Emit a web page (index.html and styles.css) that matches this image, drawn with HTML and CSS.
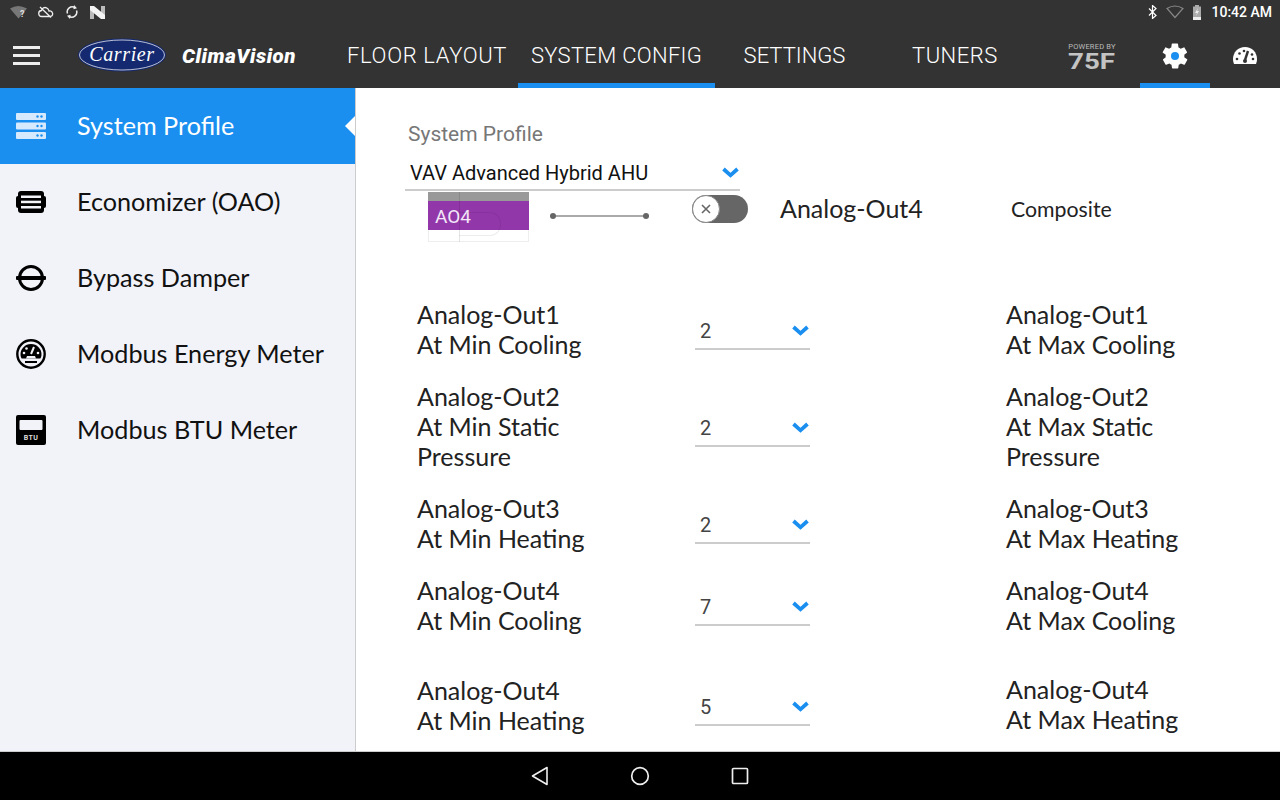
FILE: index.html
```html
<!DOCTYPE html>
<html lang="en">
<head>
<meta charset="utf-8">
<title>ClimaVision</title>
<link rel="stylesheet" href="styles.css">
</head>
<body>
<div class="screen">
  <div class="status">
    <div class="status-left">
      <svg width="17" height="14" viewBox="0 0 17 14"><path d="M0 3.500Q8-1.500 17 3.500L8.500 13.500Z" fill="#777"/><text x="10" y="12" class="q">?</text></svg>
      <svg width="16" height="14" viewBox="0 0 16 14"><path d="M4 11.500a3 3 0 0 1-.5-6C4 3 6.500 2 8.500 2.800c1.500.6 2.300 1.800 2.500 3.200a2.800 2.800 0 0 1 1.500 5.500zM2 2l11 10.500" fill="none" stroke="#eee" stroke-width="1.300"/></svg>
      <svg width="14" height="14" viewBox="0 0 14 14"><path d="M2.500 8.500A5 5 0 0 1 10 2.700M11.500 5.500A5 5 0 0 1 4 11.300" fill="none" stroke="#eee" stroke-width="1.500"/><path d="M9 0l3 3.200-3.600 1zM5 14l-3-3.200 3.600-1z" fill="#eee"/></svg>
      <svg width="15" height="14" viewBox="0 0 15 14"><path d="M0 1h4v13H0zM11 1h4v13h-4z" fill="#bbb"/><path d="M0 1h4l11 9v4h-4L0 5z" fill="#f4f4f4"/></svg>
    </div>
    <div class="status-right">
      <svg width="10" height="14" viewBox="0 0 10 14"><path d="M1 3.500l7 7-3.500 3V.500l3.500 3-7 7" fill="none" stroke="#fff" stroke-width="1.200"/></svg>
      <svg width="18" height="14" viewBox="0 0 18 14"><path d="M1 3.500Q9-1.500 17 3.500L9 12.500Z" fill="none" stroke="#888" stroke-width="1.200"/></svg>
      <svg width="10" height="15" viewBox="0 0 10 15"><path d="M3 0h4v1.500h2V15H1V1.500h2z" fill="#aaa"/><path d="M1 12h8v3H1z" fill="#eee"/><path d="M6 3L3 8h2l-1 3 3-5H5z" fill="#eee"/></svg>
      <span class="clock">10:42 AM</span>
    </div>
  </div>
  <header class="topbar">
    <div class="burger"><i></i><i></i><i></i></div>
    <svg class="carrier" width="90" height="34" viewBox="0 0 90 34"><ellipse cx="45" cy="17" rx="44" ry="16.500" fill="#14296f"/><ellipse cx="45" cy="17" rx="42.500" ry="15" fill="none" stroke="#fff" stroke-width=".7"/><text x="45" y="23" class="carrier-text">Carrier</text></svg>
    <span class="brand">ClimaVision</span>
    <nav class="tabs">
      <a class="tab t1">FLOOR LAYOUT</a>
      <a class="tab t2 on">SYSTEM CONFIG</a>
      <a class="tab t3">SETTINGS</a>
      <a class="tab t4">TUNERS</a>
    </nav>
    <div class="powered">
      <span class="pw">POWERED BY</span>
      <svg class="sf-box" width="48" height="26" viewBox="0 0 48 26"><text x="0" y="18" textLength="47" lengthAdjust="spacingAndGlyphs" class="sf">75F</text></svg>
    </div>
    <div class="hicon on">
      <svg width="30" height="30" viewBox="0 0 24 24"><path fill="#fff" d="M19.400 13c0-.3.100-.6.100-1s0-.7-.1-1l2.100-1.600c.2-.2.200-.4.100-.6l-2-3.500c-.1-.2-.4-.3-.6-.2l-2.500 1c-.5-.4-1.100-.7-1.700-1l-.4-2.700c0-.2-.2-.4-.5-.4h-4c-.3 0-.5.200-.5.400l-.4 2.700c-.6.300-1.200.6-1.700 1l-2.500-1c-.2-.1-.5 0-.6.200l-2 3.500c-.1.200-.1.400.1.600L4.600 11c0 .3-.1.700-.1 1s0 .7.100 1l-2.100 1.600c-.2.200-.2.400-.1.600l2 3.500c.1.200.4.300.6.200l2.500-1c.5.400 1.100.7 1.700 1l.4 2.700c0 .2.200.4.500.4h4c.3 0 .5-.2.500-.4l.4-2.700c.6-.3 1.200-.6 1.700-1l2.500 1c.2.100.5 0 .6-.2l2-3.500c.1-.2.100-.4-.1-.6z"/><circle cx="12" cy="12" r="3.200" fill="#1a8ff0"/></svg>
    </div>
    <div class="hicon">
      <svg width="26" height="24" viewBox="0 0 26 24"><path fill="#fff" d="M13 3C6 3 1 8.500 1 15c0 2 .5 3.500 1 5h22c.5-1.500 1-3 1-5 0-6.500-5-12-12-12z"/><path d="M13 16l3-9" stroke="#333" stroke-width="2.400"/><circle cx="13" cy="17" r="2" fill="#333"/><g fill="#333"><circle cx="5" cy="15" r="1.300"/><circle cx="7.500" cy="9.500" r="1.300"/><circle cx="12" cy="7" r="1.300"/><circle cx="20" cy="10.500" r="1.300"/><circle cx="21" cy="15" r="1.300"/></g></svg>
    </div>
  </header>
  <div class="body">
    <aside class="side">
      <div class="item active">
        <svg class="ic" width="30" height="26" viewBox="0 0 30 26"><g fill="#d7eafd"><rect y="0" width="30" height="7" rx="1"/><rect y="9.500" width="30" height="7" rx="1"/><rect y="19" width="30" height="7" rx="1"/></g><g fill="#1a8ff0"><circle cx="21.500" cy="3.500" r="1.200"/><circle cx="25.500" cy="3.500" r="1.200"/><circle cx="21.500" cy="13" r="1.200"/><circle cx="25.500" cy="13" r="1.200"/><circle cx="21.500" cy="22.500" r="1.200"/><circle cx="25.500" cy="22.500" r="1.200"/></g></svg>
        <span>System Profile</span>
        <i class="caret"></i>
      </div>
      <div class="item">
        <svg class="ic" width="30" height="22" viewBox="0 0 30 22"><rect x="2" y="0" width="26" height="22" rx="3" fill="#000"/><rect x="0" y="5" width="30" height="12" rx="2" fill="#000"/><g fill="#f2f3f9"><rect x="5" y="4.500" width="20" height="2.500"/><rect x="5" y="9.700" width="20" height="2.500"/><rect x="5" y="15" width="20" height="2.500"/></g></svg>
        <span>Economizer (OAO)</span>
      </div>
      <div class="item">
        <svg class="ic" width="30" height="26" viewBox="0 0 30 26"><circle cx="15" cy="13" r="11.500" fill="none" stroke="#000" stroke-width="3"/><rect x="0" y="11" width="30" height="4" rx="1" fill="#000"/></svg>
        <span>Bypass Damper</span>
      </div>
      <div class="item">
        <svg class="ic" width="30" height="30" viewBox="0 0 30 30"><circle cx="15" cy="15" r="13.700" fill="none" stroke="#000" stroke-width="2.400"/><path d="M15 5C9 5 4.500 10 4.500 15c0 2 .5 3.500 1.200 4.500h18.600c.7-1 1.200-2.500 1.200-4.500C25.500 10 21 5 15 5z" fill="#000"/><path d="M15 15l3-7" stroke="#f2f3f9" stroke-width="2"/><g fill="#f2f3f9"><circle cx="8" cy="14" r="1.300"/><circle cx="10.500" cy="9.500" r="1.300"/><circle cx="22" cy="14" r="1.300"/><path d="M11 17h8l1 2.500H10z"/></g><rect x="9" y="22" width="12" height="2" fill="#000"/></svg>
        <span>Modbus Energy Meter</span>
      </div>
      <div class="item">
        <svg class="ic" width="30" height="30" viewBox="0 0 30 30"><rect width="30" height="30" rx="2" fill="#000"/><rect x="3.500" y="5" width="23" height="10" rx="1" fill="#f2f3f9"/><text x="15" y="25" class="btu">BTU</text></svg>
        <span>Modbus BTU Meter</span>
      </div>
    </aside>
    <main class="content">
      <div class="profile">
        <div class="profile-label">System Profile</div>
        <div class="profile-select"><span>VAV Advanced Hybrid AHU</span><svg class="chev" width="17" height="11" viewBox="0 0 17 11"><path d="M1.500 2L8.500 8.300 15.500 2" fill="none" stroke="#1a8ff0" stroke-width="3.800"/></svg></div>
      </div>
      <div class="mapping">
        <div class="ao-thumb">
          <div class="ao-gray"></div>
          <div class="ao-purple">AO4</div>
          <div class="ao-grid"></div>
        </div>
        <div class="wire"></div>
        <div class="toggle"><div class="knob"><svg width="12" height="12" viewBox="0 0 12 12"><path d="M2 2l8 8M10 2l-8 8" stroke="#666" stroke-width="1.600"/></svg></div></div>
        <div class="map-name">Analog-Out4</div>
        <div class="map-type">Composite</div>
      </div>
      <div class="rows">
        <div class="row"><div class="lbl">Analog-Out1<br>At Min Cooling</div><div class="sel"><span>2</span><svg class="chev" width="17" height="11" viewBox="0 0 17 11"><path d="M1.500 2L8.500 8.300 15.500 2" fill="none" stroke="#1a8ff0" stroke-width="3.800"/></svg></div><div class="lbl rt">Analog-Out1<br>At Max Cooling</div></div>
        <div class="row"><div class="lbl">Analog-Out2<br>At Min Static<br>Pressure</div><div class="sel"><span>2</span><svg class="chev" width="17" height="11" viewBox="0 0 17 11"><path d="M1.500 2L8.500 8.300 15.500 2" fill="none" stroke="#1a8ff0" stroke-width="3.800"/></svg></div><div class="lbl rt">Analog-Out2<br>At Max Static<br>Pressure</div></div>
        <div class="row"><div class="lbl">Analog-Out3<br>At Min Heating</div><div class="sel"><span>2</span><svg class="chev" width="17" height="11" viewBox="0 0 17 11"><path d="M1.500 2L8.500 8.300 15.500 2" fill="none" stroke="#1a8ff0" stroke-width="3.800"/></svg></div><div class="lbl rt">Analog-Out3<br>At Max Heating</div></div>
        <div class="row"><div class="lbl">Analog-Out4<br>At Min Cooling</div><div class="sel"><span>7</span><svg class="chev" width="17" height="11" viewBox="0 0 17 11"><path d="M1.500 2L8.500 8.300 15.500 2" fill="none" stroke="#1a8ff0" stroke-width="3.800"/></svg></div><div class="lbl rt">Analog-Out4<br>At Max Cooling</div></div>
        <div class="row last"><div class="lbl">Analog-Out4<br>At Min Heating</div><div class="sel"><span>5</span><svg class="chev" width="17" height="11" viewBox="0 0 17 11"><path d="M1.500 2L8.500 8.300 15.500 2" fill="none" stroke="#1a8ff0" stroke-width="3.800"/></svg></div><div class="lbl rt up">Analog-Out4<br>At Max Heating</div></div>
      </div>
    </main>
  </div>
  <footer class="navbar">
    <svg class="n-back" width="18" height="20" viewBox="0 0 18 20"><path d="M16 1.500v17L1.500 10z" fill="none" stroke="#eee" stroke-width="1.600" stroke-linejoin="round"/></svg>
    <svg class="n-home" width="20" height="20" viewBox="0 0 20 20"><circle cx="10" cy="10" r="8.300" fill="none" stroke="#eee" stroke-width="1.700"/></svg>
    <svg class="n-rec" width="18" height="18" viewBox="0 0 18 18"><rect x="1.500" y="1.500" width="15" height="15" rx="1" fill="none" stroke="#eee" stroke-width="1.700"/></svg>
  </footer>
</div>
</body>
</html>
```
FILE: styles.css
```css
* { box-sizing: border-box; }
html, body { margin: 0; padding: 0; }
body { width: 1280px; height: 800px; overflow: hidden; font-family: "Lato", sans-serif; background: #fff; }
.screen { width: 1280px; height: 800px; display: flex; flex-direction: column; }

.status { height: 24px; flex: none; background: #333; display: flex; justify-content: space-between; align-items: center; padding: 0 8px 0 10px; }
.status-left { display: flex; align-items: center; gap: 11px; }
.status-right { display: flex; align-items: center; gap: 8px; }
.q { font: bold 9px "Roboto", sans-serif; fill: #ddd; }
.clock { font: 500 14px "Roboto", sans-serif; color: #fff; margin-left: 1px; }

.topbar { height: 64px; flex: none; background: #333; display: flex; align-items: stretch; position: relative; }
.burger { width: 28px; margin-left: 13px; display: flex; flex-direction: column; justify-content: center; gap: 5px; margin-top: -1px; }
.burger i { display: block; height: 3px; background: #eee; }
.carrier { margin: 14px 0 0 37px; flex: none; }
.carrier-text { font: italic 20px "Liberation Serif", serif; fill: #fff; text-anchor: middle; letter-spacing: .6px; }
.brand { font: italic 900 20.500px "Roboto", sans-serif; color: #fff; margin: 20px 0 0 15px; line-height: 24px; width: 114px; flex: none; white-space: nowrap; letter-spacing: .52px; }
.tabs { display: flex; margin-left: 51px; }
.tab { font: 300 22px/64px "Roboto", sans-serif; color: #fff; height: 64px; text-align: center; white-space: nowrap; border-bottom: 5px solid transparent; }
.tab.t1 { width: 159px; letter-spacing: .65px; }
.tab.t2 { width: 197px; margin-left: 12px; letter-spacing: .3px; }
.tab.t3 { width: 103px; margin-left: 28px; }
.tab.t4 { width: 85px; margin-left: 66px; letter-spacing: .5px; }
.tab.on { border-bottom-color: #1a8ff0; }
.powered { width: 48px; height: 45px; margin: 19px 0 0 71px; display: flex; flex-direction: column; align-items: center; color: #bbb; flex: none; }
.pw { font: 7.500px/8px "Roboto", sans-serif; white-space: nowrap; letter-spacing: .2px; height: 8px; }
.sf-box { flex: none; }
.sf { font: bold 22px "Roboto", sans-serif; fill: #c4c4c4; }
.hicon { width: 70px; height: 64px; flex: none; display: flex; justify-content: center; align-items: center; padding-top: 5px; border-bottom: 5px solid transparent; }
.hicon.on { margin-left: 24px; border-bottom-color: #1a8ff0; }

.body { flex: 1; min-height: 0; display: flex; border-bottom: 1px solid #ccc; }
.side { width: 356px; flex: none; background: #f2f3f9; border-right: 1px solid #ccc; }
.item { height: 76px; display: flex; align-items: center; font-size: 25.200px; color: #111; position: relative; }
.item .ic { position: absolute; left: 16px; top: 50%; transform: translateY(-50%); }
.item span { margin: -2px 0 0 77px; }
.item.active { background: #1a8ff0; color: #fff; }
.caret { position: absolute; right: 0; top: 28px; width: 0; height: 0; border: 10px solid transparent; border-right-color: #fff; border-left-width: 0; }
.btu { font: bold 7px "Roboto", sans-serif; fill: #ddd; text-anchor: middle; letter-spacing: .4px; }

.content { flex: 1; background: #fff; overflow: hidden; }
.profile { margin-left: 49px; width: 335px; padding-top: 33px; position: relative; z-index: 1; }
.profile-label { font: 21px/26px "Roboto", sans-serif; color: #777; margin-left: 3px; }
.profile-select { height: 36px; display: flex; align-items: center; justify-content: space-between; padding: 1px 1px 0 5px; font: 20px "Roboto", sans-serif; color: #111; border-bottom: 2px solid #ccc; background: #fff; margin-top: 8px; }
.chev { flex: none; }

.mapping { display: flex; align-items: flex-start; height: 50px; margin: 1px 0 0 72px; }
.ao-thumb { width: 101px; height: 50px; flex: none; display: flex; flex-direction: column; position: relative; }
.ao-gray { height: 9px; background: #999; flex: none; }
.ao-purple { height: 29px; background: #9237aa; color: #f3e6f7; font: 19px/32px "Roboto", sans-serif; padding-left: 7px; flex: none; }
.ao-grid { flex: 1; border: 1px solid #eee; border-top: 0; }
.ao-thumb::after { content: ""; position: absolute; left: 31px; top: 0; bottom: 0; width: 1px; background: rgba(0,0,0,.1); }
.ao-thumb::before { content: ""; position: absolute; left: 31px; top: 20px; width: 41px; height: 22px; border: 1px solid rgba(0,0,0,.07); border-left: 0; border-radius: 0 11px 11px 0; }
.wire { width: 99px; height: 7px; margin: 20px 0 0 21px; flex: none; position: relative; background: linear-gradient(#aaa,#aaa) center/100% 2px no-repeat; }
.wire::before, .wire::after { content: ""; position: absolute; top: .5px; width: 6px; height: 6px; border-radius: 50%; background: #666; }
.wire::before { left: 0; }
.wire::after { right: 0; }
.toggle { width: 56px; height: 28px; border-radius: 14px; background: #666; margin: 3px 0 0 43px; flex: none; }
.knob { width: 28px; height: 28px; border-radius: 50%; background: #fff; border: 1px solid #888; display: flex; align-items: center; justify-content: center; }
.map-name { font-size: 25px; line-height: 30px; color: #222; margin: 1px 0 0 32px; width: 231px; flex: none; }
.map-type { font-size: 21.300px; line-height: 30px; color: #222; margin-top: 2px; flex: none; }

.rows { margin-top: 57px; padding-left: 61px; display: flex; flex-direction: column; gap: 22px; }
.row { display: grid; grid-template-columns: 278px 115px 1fr; align-items: center; }
.row.last { margin-top: 18px; }
.lbl { font-size: 25px; line-height: 30px; color: #222; }
.lbl.rt { margin-left: 196px; }
.lbl.up { margin-top: -2px; }
.sel { height: 36px; margin-top: 5px; display: flex; align-items: center; justify-content: space-between; padding: 0 1px 0 5px; border-bottom: 2px solid #ccc; font: 20px "Roboto", sans-serif; color: #444; }

.navbar { height: 48px; flex: none; background: #000; display: flex; justify-content: center; align-items: center; gap: 81px; }
```
